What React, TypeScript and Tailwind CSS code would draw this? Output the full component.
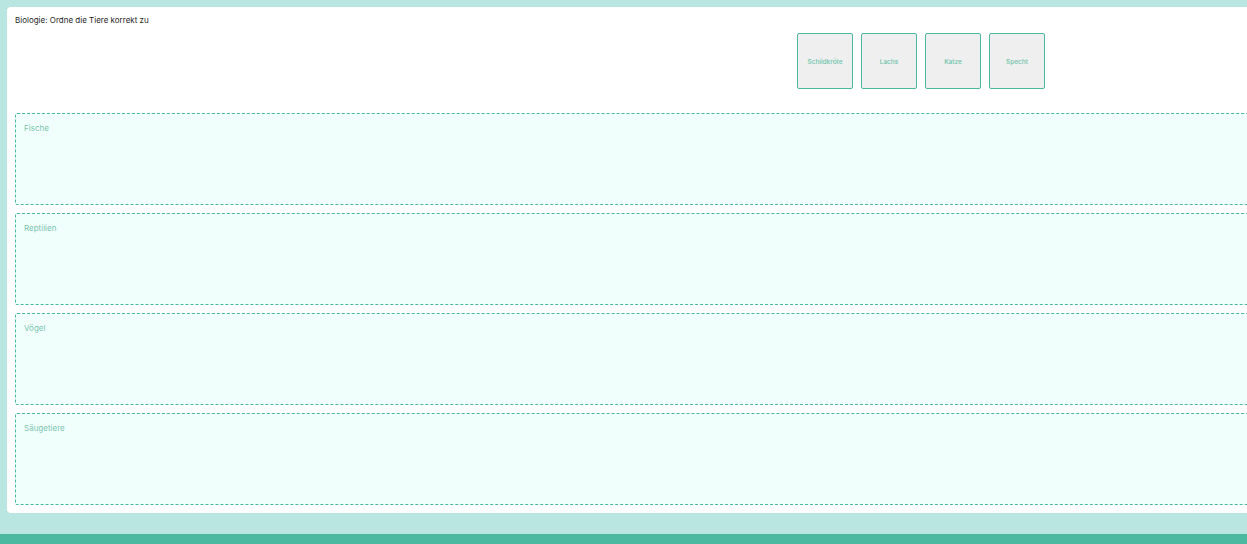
import React from "react";

const animals = ["Schildkröte", "Lachs", "Katze", "Specht"];
const groups = ["Fische", "Reptilien", "Vögel", "Säugetiere"];

export default function App() {
  return (
    <div className="h-[544px] w-[1247px] overflow-hidden bg-[#b9e6e0] flex flex-col" style={{ fontFamily: "Inter, 'Noto Sans', sans-serif" }}>
      <div className="flex-1 pt-[7px] pl-[7px]">
        <div className="w-[1300px] h-[506px] bg-white rounded-[4px] pt-[9px] pl-[8px]">
          <h1 className="text-[8px] leading-[9px] text-[#1f1f1f] font-normal">Biologie: Ordne die Tiere korrekt zu</h1>
          <div className="flex gap-[8px] ml-[782px] mt-[8px]">
            {animals.map((a) => (
              <div key={a} className="w-[56px] h-[56px] bg-[#efefef] border border-[#4ab9a0] rounded-[2px] flex items-center justify-center pt-[2px] text-[6.5px] leading-none font-medium text-[#6cc2aa]">
                {a}
              </div>
            ))}
          </div>
          <div className="flex flex-col gap-[8px] mt-[24px]">
            {groups.map((g) => (
              <div key={g} className="h-[92px] border border-dashed border-[#4ab9a0] bg-[#f1fffc] rounded-[2px] px-[8px] pt-[9px]">
                <div className="text-[8px] leading-[10px] text-[#7cc4b0]">{g}</div>
              </div>
            ))}
          </div>
        </div>
      </div>
      <div className="h-[10px] bg-[#4ab9a0]" />
    </div>
  );
}
